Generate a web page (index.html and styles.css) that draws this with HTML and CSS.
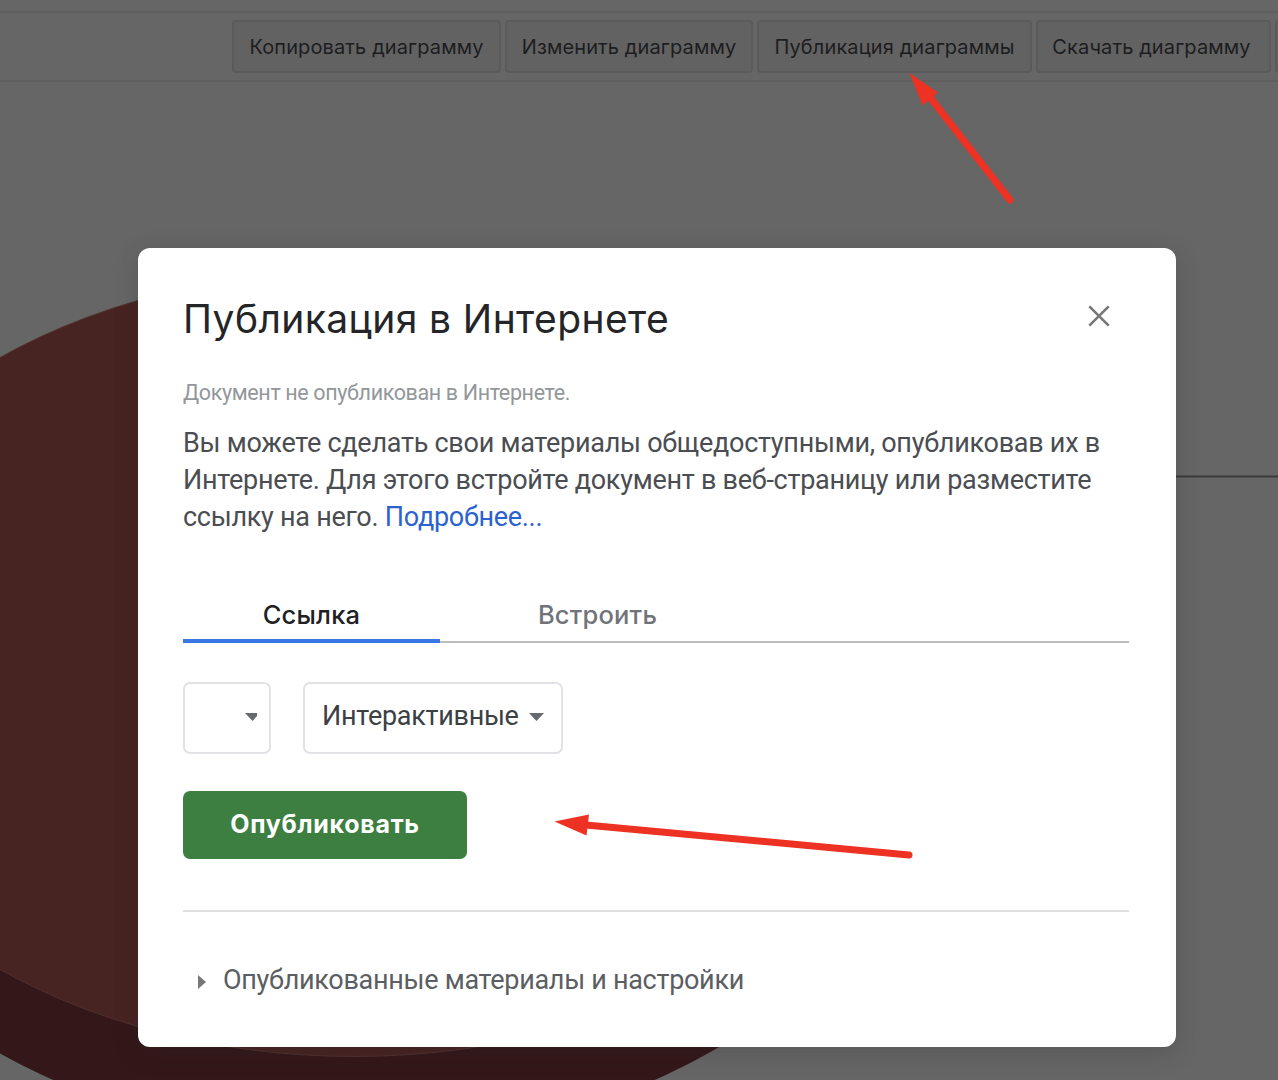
FILE: index.html
```html
<!DOCTYPE html>
<html lang="ru">
<head>
<meta charset="utf-8">
<title>Публикация в Интернете</title>
<link rel="stylesheet" href="styles.css">
</head>
<body>
<div class="page">
  <svg class="chart" width="1278" height="1080" viewBox="0 0 1278 1080">
    <path class="axis" d="M1100 476.5H1278"/>
    <ellipse class="pie-side" cx="354" cy="747.5" rx="564" ry="393"/>
    <ellipse class="pie-top" cx="354" cy="663.5" rx="564" ry="393"/>
  </svg>
  <header class="toolbar">
    <button class="tool copy"><span>Копировать диаграмму</span></button>
    <button class="tool edit"><span>Изменить диаграмму</span></button>
    <button class="tool publish"><span>Публикация диаграммы</span></button>
    <button class="tool download"><span>Скачать диаграмму</span></button>
    <button class="tool more"></button>
  </header>
  <main class="dialog">
    <div class="dialog-head">
      <h1><span>Публикация в Интернете</span></h1>
      <svg class="close" width="22" height="22" viewBox="0 0 22 22"><path d="M1.3 1.3 20.7 20.7M20.7 1.3 1.3 20.7"/></svg>
    </div>
    <p class="status"><span>Документ не опубликован в Интернете.</span></p>
    <p class="intro"><span>Вы можете сделать свои материалы общедоступными, опубликовав их в</span><br><span>Интернете. Для этого встройте документ в веб-страницу или разместите</span><br><span>ссылку на него. <a>Подробнее...</a></span></p>
    <nav class="tabs">
      <div class="tab active"><span>Ссылка</span></div>
      <div class="tab embed"><span>Встроить</span></div>
    </nav>
    <div class="selects">
      <div class="select small"><svg width="12" height="8" viewBox="0 0 12 8"><path d="M0 0H12V3L7.500 8Z"/></svg></div>
      <div class="select"><span>Интерактивные</span><svg width="15" height="8" viewBox="0 0 15 8"><path d="M0 0H15L7.500 8Z"/></svg></div>
    </div>
    <button class="submit"><span>Опубликовать</span></button>
    <div class="details"><svg width="8" height="14" viewBox="0 0 8 14"><path d="M0 0 8 7 0 14Z"/></svg><span>Опубликованные материалы и настройки</span></div>
  </main>
  <svg class="arrows" width="1278" height="1080" viewBox="0 0 1278 1080">
    <path class="shaft" d="M929 96 1010 200M586 825 909 855"/>
    <path class="head" d="M909.500 73 938 92.500 922.500 105.500ZM554.500 821.500 589 814.500 586.500 835.500Z"/>
  </svg>
</div>
</body>
</html>
```
FILE: styles.css
```css
* { box-sizing: border-box; }
body { margin: 0; font-family: Roboto, "Liberation Sans", sans-serif; }
.page { display: flow-root; position: relative; width: 1278px; height: 1080px; overflow: hidden; background: #666; }
.chart, .arrows { position: absolute; left: 0; top: 0; }
.arrows { pointer-events: none; }
.pie-side { fill: #331719; }
.pie-top { fill: #472321; stroke: #50302f; stroke-width: 1; }
.axis { stroke: #3b3b3b; stroke-width: 2; }
.shaft { stroke: #ed3224; stroke-width: 7; stroke-linecap: round; }
.head { fill: #ed3224; }
button { font-family: inherit; padding: 0; margin: 0; }
span { white-space: nowrap; }
.toolbar { position: relative; display: flex; gap: 4px; height: 71px; width: 1400px; margin-top: 11px; padding: 7px 0 0 232px; border-top: 2px solid #5f5f5f; border-bottom: 2px solid #5f5f5f; }
.tool { flex: none; height: 53px; padding-top: 1px; background: #626262; border: 2px solid #5b5b5b; border-radius: 4px; color: #1d1d1f; font: 400 20px/48px Inter, sans-serif; letter-spacing: .12px; }
.copy { width: 269px; }
.edit { width: 248px; }
.publish { width: 275px; }
.download { width: 235px; padding-right: 4px; }
.more { width: 60px; }
.dialog { position: relative; width: 1037.500px; height: 799px; margin: 166px 0 0 138px; padding: 40px 47px 0 45px; background: #fff; border-radius: 12px; box-shadow: 0 6px 24px rgba(40,40,40,.22); color: #4a4d51; }
.dialog-head { display: flex; justify-content: space-between; height: 62px; }
h1 { margin: 0; font: 400 39px/62px Inter, sans-serif; letter-spacing: .4px; color: #242528; }
.close { margin: 17px 18.500px 0 0; stroke: #777; stroke-width: 2.600; }
.status { margin: 30px 0 0; font-size: 21.500px; line-height: 26px; letter-spacing: -.37px; color: #93979b; }
.intro { margin: 19px 0 0; font-size: 27px; line-height: 37px; letter-spacing: -.27px; }
.intro a { color: #2b62cf; }
.tabs { display: flex; height: 56px; margin-top: 51px; border-bottom: 2px solid #bdbdbd; font: 500 25.500px/55px Inter, sans-serif; letter-spacing: .2px; }
.tab { width: 257px; height: 56px; text-align: center; }
.embed { width: 315px; color: #707479; }
.active { color: #202124; border-bottom: 4px solid #3b77e4; }
.selects { display: flex; gap: 32px; margin-top: 39px; }
.select { display: flex; align-items: center; gap: 10px; width: 260px; height: 72px; padding: 0 0 4px 17px; border: 2px solid #e1e2e6; border-radius: 7px; font-size: 27px; letter-spacing: -.29px; color: #3d4043; }
.select svg { flex: none; fill: #66696d; margin-top: 2px; }
.small { width: 88px; padding-left: 60px; }
.submit { display: block; width: 284px; height: 68px; padding-bottom: 2px; margin-top: 37px; border: 0; border-radius: 7px; background: #3c7f40; color: #fff; font: 700 25px/64px Inter, sans-serif; letter-spacing: .7px; }
.details { display: flex; align-items: center; gap: 17px; margin-top: 51px; padding-left: 15px; height: 137px; border-top: 2px solid #e0e0e0; font-size: 27px; letter-spacing: -.29px; color: #5b5e62; }
.details svg { fill: #777; margin-top: 4px; }
```
